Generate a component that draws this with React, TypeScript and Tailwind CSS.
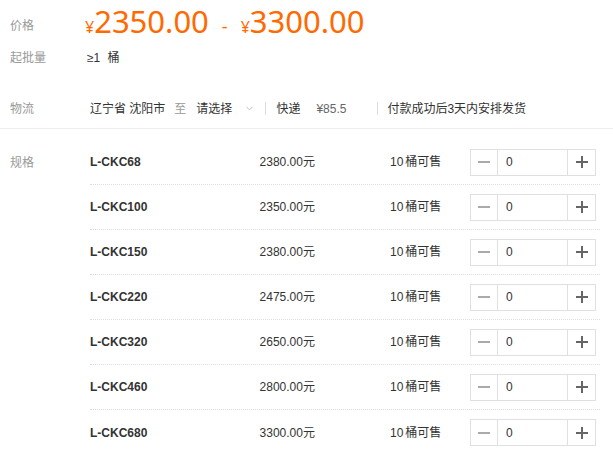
import { ChevronDown } from "lucide-react";

const specs = [
  { name: "L-CKC68", price: "2380.00" },
  { name: "L-CKC100", price: "2350.00" },
  { name: "L-CKC150", price: "2380.00" },
  { name: "L-CKC220", price: "2475.00" },
  { name: "L-CKC320", price: "2650.00" },
  { name: "L-CKC460", price: "2800.00" },
  { name: "L-CKC680", price: "3300.00" },
];

function Stepper() {
  return (
    <div className="flex h-[27px] w-[126px] border border-[#e0e0e0]">
      <button className="flex w-[27px] items-center justify-center border-r border-[#e0e0e0] text-[#aaa]">
        <svg width="12" height="12" viewBox="0 0 12 12">
          <rect x="0" y="5" width="12" height="2" fill="currentColor" />
        </svg>
      </button>
      <div className="flex flex-1 items-center pl-[8px] text-[#333]">0</div>
      <button className="flex w-[28px] items-center justify-center border-l border-[#e0e0e0] text-[#666]">
        <svg width="12" height="12" viewBox="0 0 12 12">
          <rect x="0" y="5" width="12" height="2" fill="currentColor" />
          <rect x="5" y="0" width="2" height="12" fill="currentColor" />
        </svg>
      </button>
    </div>
  );
}

export default function App() {
  return (
    <div className="h-[458px] w-[613px] overflow-hidden bg-white font-['Liberation_Sans','Noto_Sans_CJK_SC',sans-serif] text-[12px] text-[#333]">
      {/* Price */}
      <div className="flex h-[46px] items-center pl-[10px]">
        <div className="w-[75px] pt-[5px] text-[#999]">价格</div>
        <div className="flex items-baseline font-['Noto_Sans','Noto_Sans_CJK_SC',sans-serif] text-[#ff6a00]">
          <span className="text-[16px]">¥</span>
          <span className="text-[31px] leading-none">2350.00</span>
          <span className="mx-[13px] text-[18px]">-</span>
          <span className="text-[16px]">¥</span>
          <span className="text-[31px] leading-none">3300.00</span>
        </div>
      </div>

      {/* Min order */}
      <div className="flex h-[24px] items-center pl-[10px]">
        <div className="w-[77px] text-[#999]">起批量</div>
        <div>
          ≥1 <span className="ml-[4px]">桶</span>
        </div>
      </div>

      {/* Logistics */}
      <div className="mt-[19px] flex h-[40px] items-center border-b border-[#eee] pl-[10px]">
        <div className="w-[80px] text-[#999]">物流</div>
        <span>辽宁省 沈阳市</span>
        <span className="ml-[9px] text-[#999]">至</span>
        <span className="ml-[10px]">请选择</span>
        <ChevronDown className="ml-[12px] h-[11px] w-[11px] text-[#bbb]" strokeWidth={2} />
        <span className="ml-[10px] h-[13px] w-px bg-[#ddd]" />
        <span className="ml-[10px]">快递</span>
        <span className="ml-[16px] text-[#666]">¥85.5</span>
        <span className="ml-[31px] h-[13px] w-px bg-[#ddd]" />
        <span className="ml-[9px]">付款成功后3天内安排发货</span>
      </div>

      {/* Specs */}
      <div className="mt-[11px] flex pl-[10px]">
        <div className="w-[80px] pt-[14px] text-[#999]">规格</div>
        <div className="w-[510px]">
          {specs.map((s, i) => (
            <div
              key={s.name}
              className={`flex h-[45px] items-center ${i < specs.length - 1 ? "border-b border-dotted border-[#ddd]" : ""}`}
            >
              <div className="w-[130px] font-bold">{s.name}</div>
              <div className="w-[95px] text-right">{s.price}元</div>
              <div className="ml-[75px] w-[80px]">
                10<span className="ml-[2px]">桶可售</span>
              </div>
              <Stepper />
            </div>
          ))}
        </div>
      </div>
    </div>
  );
}
